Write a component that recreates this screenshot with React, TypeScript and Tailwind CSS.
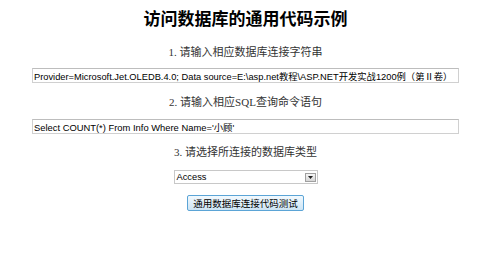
import React from 'react';

const serif = { fontFamily: '"Liberation Serif", "Noto Sans CJK SC", serif' };
const sans = { fontFamily: '"Liberation Sans", "Noto Sans CJK SC", sans-serif' };

export default function App() {
  return (
    <div className="w-[491px] h-[260px] bg-white flex flex-col items-center pt-[10px]" style={serif}>
      <h1 className="text-[17px] leading-[20px] font-bold text-black">访问数据库的通用代码示例</h1>

      <p className="mt-[15px] text-[11px] leading-[14px] text-[#333] whitespace-nowrap">1. 请输入相应数据库连接字符串</p>
      <input
        readOnly
        value="Provider=Microsoft.Jet.OLEDB.4.0; Data source=E:\asp.net教程\ASP.NET开发实战1200例（第Ⅱ卷）"
        className="mt-[9px] w-[427px] h-[15px] border border-[#d0d0d0] border-t-[#bdbdbd] px-[1px] text-[9.3px] text-black outline-none"
        style={sans}
      />

      <p className="mt-[12px] text-[11px] leading-[14px] text-[#333] whitespace-nowrap">2. 请输入相应SQL查询命令语句</p>
      <input
        readOnly
        value="Select COUNT(*) From Info Where Name='小顾'"
        className="mt-[10px] w-[427px] h-[15px] border border-[#d0d0d0] border-t-[#bdbdbd] px-[1px] text-[9.4px] text-black outline-none"
        style={sans}
      />

      <p className="mt-[11px] text-[11px] leading-[14px] text-[#333] whitespace-nowrap">3. 请选择所连接的数据库类型</p>
      <div
        className="mt-[11px] w-[144px] h-[14px] border border-[#c8c8c8] flex items-center justify-between text-[9.3px] text-black"
        style={sans}
      >
        <span className="pl-[2px] leading-[12px]">Access</span>
        <span className="w-[11px] h-[9px] mr-[1px] border border-[#a0a0a0] bg-gradient-to-b from-[#f6f6f6] to-[#d6d6d6] flex items-center justify-center">
          <svg width="5" height="3" viewBox="0 0 5 3">
            <path d="M0 0h5L2.5 3z" fill="#222" />
          </svg>
        </span>
      </div>

      <button
        className="mt-[11px] w-[117px] h-[16px] p-0 border border-[#5ba4d6] rounded-[2px] bg-gradient-to-b from-[#f2f9fe] to-[#cde4f4] text-[9.5px] leading-[14px] text-black whitespace-nowrap"
        style={{ fontFamily: '"Noto Sans CJK SC", sans-serif' }}
      >
        通用数据库连接代码测试
      </button>
    </div>
  );
}
